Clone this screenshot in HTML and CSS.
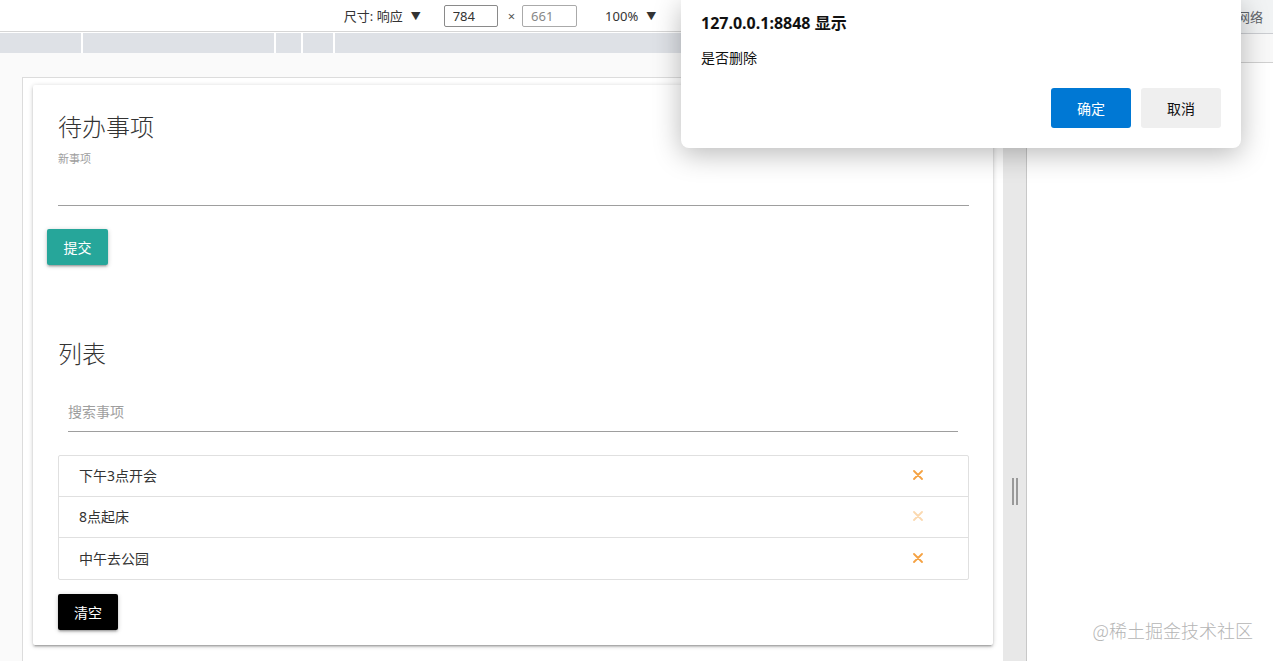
FILE: index.html
```html
<!DOCTYPE html>
<html lang="zh-CN">
<head>
    <meta charset="UTF-8">
    <meta name="viewport" content="width=device-width, initial-scale=1.0">
    <title>待办事项</title>
    <link rel="stylesheet" href="styles.css">
</head>
<body>
    <div class="device">
        <div class="device-toolbar">
            <span class="tool-label">尺寸: 响应</span>
            <span class="tool-arrow">▼</span>
            <input class="tool-input" type="text" value="784">
            <span class="tool-times">×</span>
            <input class="tool-input tool-input-muted" type="text" value="661">
            <span class="tool-label tool-zoom">100%</span>
            <span class="tool-arrow">▼</span>
        </div>
        <div class="ruler">
            <div class="ruler-seg" style="width: 81px"></div>
            <div class="ruler-seg" style="width: 191px"></div>
            <div class="ruler-seg" style="width: 25px"></div>
            <div class="ruler-seg" style="width: 30px"></div>
            <div class="ruler-seg ruler-rest"></div>
        </div>
        <div class="stage">
            <div class="frame">
                <div class="card">
                    <h4 class="card-title">待办事项</h4>
                    <label class="field-label" for="newItem">新事项</label>
                    <input class="field-input" id="newItem" type="text">
                    <button class="btn btn-teal">提交</button>

                    <h4 class="card-title list-title">列表</h4>
                    <input class="search-input" type="text" placeholder="搜索事项">
                    <ul class="collection">
                        <li class="collection-item">
                            <span>下午3点开会</span>
                            <span class="remove"><svg width="10" height="10" viewBox="0 0 10 10"><path d="M1 1L9 9M9 1L1 9" stroke="currentColor" stroke-width="1.8" stroke-linecap="round"/></svg></span>
                        </li>
                        <li class="collection-item">
                            <span>8点起床</span>
                            <span class="remove remove-faded"><svg width="10" height="10" viewBox="0 0 10 10"><path d="M1 1L9 9M9 1L1 9" stroke="currentColor" stroke-width="1.8" stroke-linecap="round"/></svg></span>
                        </li>
                        <li class="collection-item">
                            <span>中午去公园</span>
                            <span class="remove"><svg width="10" height="10" viewBox="0 0 10 10"><path d="M1 1L9 9M9 1L1 9" stroke="currentColor" stroke-width="1.8" stroke-linecap="round"/></svg></span>
                        </li>
                    </ul>
                    <button class="btn btn-black">清空</button>
                </div>
            </div>
        </div>
    </div>

    <div class="resizer">
        <div class="resizer-top"></div>
        <div class="resizer-bar">
            <span class="grip"></span>
        </div>
    </div>

    <div class="devtools">
        <div class="devtools-tabs">
            <span class="tab">元素</span>
            <span class="tab">控制台</span>
            <span class="tab">源代码</span>
            <span class="tab">网络</span>
        </div>
        <div class="devtools-bar"></div>
    </div>

    <!-- alert dialog -->
    <div class="dialog">
        <div class="dialog-title">127.0.0.1:8848 显示</div>
        <div class="dialog-text">是否删除</div>
        <div class="dialog-actions">
            <button class="dialog-btn dialog-ok">确定</button>
            <button class="dialog-btn dialog-cancel">取消</button>
        </div>
    </div>

    <div class="watermark">@稀土掘金技术社区</div>
</body>
</html>
```

FILE: styles.css
```css
body {
    margin: 0;
    height: 661px;
    overflow: hidden;
    display: flex;
    font-family: "Noto Sans", "Noto Sans CJK SC", sans-serif;
    color: #333;
    background-color: #fff;
}

/* Device emulation area */
.device {
    width: 1003px;
    display: flex;
    flex-direction: column;
    flex-shrink: 0;
}

.device-toolbar {
    height: 32px;
    border-bottom: 1px solid #d6d6d6;
    display: flex;
    align-items: center;
    justify-content: center;
    font-size: 13px;
    color: #333;
    box-sizing: border-box;
    padding-right: 3px;
}

.tool-arrow {
    font-size: 10px;
    margin-left: 8px;
}

.tool-input {
    width: 54px;
    height: 22px;
    box-sizing: border-box;
    border: 1px solid #8a8a8a;
    border-radius: 2px;
    padding: 0 8px;
    font: 13px "Noto Sans", sans-serif;
    color: #333;
    margin-left: 23px;
}

.tool-input-muted {
    width: 55px;
    margin-left: 7px;
    color: #888;
    border-color: #aaa;
}

.tool-times {
    margin-left: 10px;
    color: #555;
}

.tool-zoom {
    margin-left: 28px;
}

.ruler {
    height: 20px;
    margin-top: 1px;
    display: flex;
    gap: 2px;
    background-color: #fff;
}

.ruler-seg {
    background-color: #dee1e6;
}

.ruler-rest {
    flex: 1;
}

.stage {
    flex: 1;
    background-color: #fafafa;
    padding: 24px 0 0 22px;
    overflow: hidden;
}

.frame {
    height: 700px;
    background-color: #fff;
    border: 1px solid #dcdcdc;
    border-right: none;
    padding: 7px 10px 0 10px;
}

/* Todo card */
.card {
    background-color: #fff;
    padding: 26px 24px 15px 25px;
    box-shadow: 0 2px 2px 0 rgba(0, 0, 0, 0.14), 0 3px 1px -2px rgba(0, 0, 0, 0.12), 0 1px 5px 0 rgba(0, 0, 0, 0.2);
    border-radius: 2px;
}

.card-title {
    margin: 0;
    font-size: 24px;
    line-height: 32px;
    font-weight: 300;
    color: #333;
}

.field-label {
    display: block;
    margin-top: 8px;
    font-size: 11px;
    line-height: 16px;
    color: #9e9e9e;
}

.field-input,
.search-input {
    display: block;
    width: 100%;
    box-sizing: border-box;
    border: none;
    border-bottom: 1px solid #9e9e9e;
    outline: none;
    background: transparent;
    font: 14px "Noto Sans", "Noto Sans CJK SC", sans-serif;
    color: #333;
}

.field-input {
    height: 39px;
}

.search-input {
    width: calc(100% - 21px);
    height: 45px;
    margin: 17px 11px 0 10px;
    padding: 4px 0 0;
}

.search-input::placeholder {
    color: #9e9e9e;
}

.btn {
    display: block;
    border: none;
    border-radius: 2px;
    height: 36px;
    padding: 0 16px;
    font: 14px "Noto Sans CJK SC", sans-serif;
    color: #fff;
    cursor: pointer;
    box-shadow: 0 2px 2px 0 rgba(0, 0, 0, 0.14), 0 3px 1px -2px rgba(0, 0, 0, 0.12), 0 1px 5px 0 rgba(0, 0, 0, 0.2);
}

.btn-teal {
    background-color: #26a69a;
    width: 61px;
    margin: 23px 0 0 -11px;
}

.btn-black {
    background-color: #000;
    width: 60px;
    margin-top: 14px;
}

.list-title {
    margin-top: 73px;
}

.collection {
    list-style: none;
    margin: 23px 0 0;
    padding: 0;
    border: 1px solid #e0e0e0;
    border-radius: 2px;
}

.collection-item {
    height: 41px;
    display: flex;
    align-items: center;
    justify-content: space-between;
    padding: 0 45px 2px 20px;
    box-sizing: border-box;
    font-size: 14px;
    color: #333;
    border-bottom: 1px solid #e0e0e0;
}

.collection-item:last-child {
    height: 41px;
    border-bottom: none;
}

.remove {
    display: flex;
    color: #f5a243;
    cursor: pointer;
}

.remove-faded {
    color: #fbd9b0;
}

/* Resize handle */
.resizer {
    width: 23px;
    flex-shrink: 0;
    display: flex;
    flex-direction: column;
    border-right: 1px solid #c8c8c8;
}

.resizer-top {
    height: 54px;
}

.resizer-bar {
    flex: 1;
    background-color: #e8e8e8;
    display: flex;
    justify-content: center;
    padding-top: 424px;
}

.grip {
    width: 2px;
    height: 27px;
    border-left: 2px solid #999;
    border-right: 2px solid #999;
}

/* Devtools side panel */
.devtools {
    flex: 1;
    background-color: #fff;
}

.devtools-tabs {
    height: 33px;
    background-color: #f1f3f4;
    border-bottom: 1px solid #cbcdd1;
    display: flex;
    align-items: center;
    padding-left: 22px;
    font-size: 13px;
    color: #5f6368;
    white-space: nowrap;
}

.tab {
    padding: 0 12px;
}

.devtools-bar {
    height: 28px;
    background-color: #f8f8f8;
    border-bottom: 1px solid #d0d0d0;
}

/* Alert dialog */
.dialog {
    position: absolute;
    left: 681px;
    top: 0;
    width: 560px;
    height: 148px;
    box-sizing: border-box;
    padding: 12px 20px 0;
    background-color: #fff;
    border-radius: 0 0 8px 8px;
    box-shadow: 0 6px 28px rgba(0, 0, 0, 0.28);
}

.dialog-title {
    font-size: 16px;
    line-height: 22px;
    font-weight: bold;
    color: #111;
}

.dialog-text {
    margin-top: 14px;
    font-size: 14px;
    line-height: 20px;
    color: #111;
}

.dialog-actions {
    display: flex;
    justify-content: flex-end;
    gap: 10px;
    margin-top: 20px;
}

.dialog-btn {
    width: 80px;
    height: 40px;
    border: none;
    border-radius: 3px;
    font: 14px "Noto Sans CJK SC", sans-serif;
    cursor: pointer;
}

.dialog-ok {
    background-color: #0078d4;
    color: #fff;
}

.dialog-cancel {
    background-color: #efefef;
    color: #111;
}

.watermark {
    position: absolute;
    right: 20px;
    bottom: 18px;
    font-family: "Noto Sans CJK SC", sans-serif;
    font-size: 18px;
    font-weight: 300;
    color: #b5b5b5;
    letter-spacing: 0;
}
```
